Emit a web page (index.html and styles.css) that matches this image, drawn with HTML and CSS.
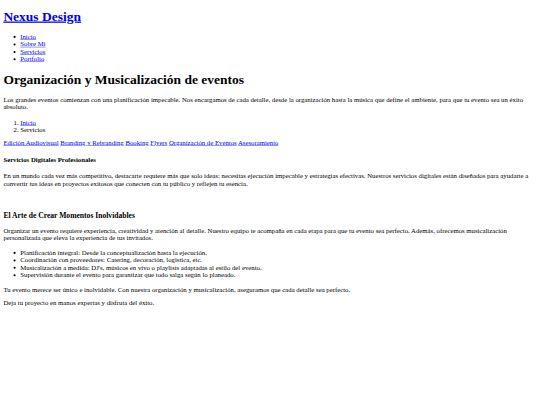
FILE: index.html
```html
<!DOCTYPE html>
<html lang="es">
<head>
<meta charset="utf-8">
<title>Nexus Design</title>
<link rel="stylesheet" href="styles.css">
</head>
<body>
<div class="page">
<header class="site-header">
  <h1 class="logo"><a href="#">Nexus Design</a></h1>
  <nav>
    <ul class="menu">
      <li><a href="#">Inicio</a></li>
      <li><a href="#">Sobre Mi</a></li>
      <li><a href="#">Servicios</a></li>
      <li><a href="#">Portfolio</a></li>
    </ul>
  </nav>
</header>
<main>
  <section class="hero">
    <h1 class="title">Organización y Musicalización de eventos</h1>
    <p>Los grandes eventos comienzan con una planificación impecable. Nos encargamos de cada detalle, desde la organización hasta la música que define el ambiente, para que tu evento sea un éxito absoluto.</p>
    <ol class="crumbs">
      <li><a href="#">Inicio</a></li>
      <li>Servicios</li>
    </ol>
    <div class="tabs">
      <a href="#">Edición Audiovisual</a>
      <a href="#">Branding y Rebranding</a>
      <a href="#">Booking</a>
      <a href="#">Flyers</a>
      <a href="#">Organización de Eventos</a>
      <a href="#">Asesoramiento</a>
    </div>
    <h4 class="sub">Servicios Digitales Profesionales</h4>
    <p>En un mundo cada vez más competitivo, destacarte requiere más que solo ideas: necesitas ejecución impecable y estrategias efectivas. Nuestros servicios digitales están diseñados para ayudarte a convertir tus ideas en proyectos exitosos que conecten con tu público y reflejen tu esencia.</p>
  </section>
  <section class="detail">
    <h3 class="section-title">El Arte de Crear Momentos Inolvidables</h3>
    <p>Organizar un evento requiere experiencia, creatividad y atención al detalle. Nuestro equipo te acompaña en cada etapa para que tu evento sea perfecto. Además, ofrecemos musicalización personalizada que eleva la experiencia de tus invitados.</p>
    <ul class="features">
      <li>Planificación integral: Desde la conceptualización hasta la ejecución.</li>
      <li>Coordinación con proveedores: Catering, decoración, logística, etc.</li>
      <li>Musicalización a medida: DJ's, músicos en vivo o playlists adaptadas al estilo del evento.</li>
      <li>Supervisión durante el evento para garantizar que todo salga según lo planeado.</li>
    </ul>
    <p>Tu evento merece ser único e inolvidable. Con nuestra organización y musicalización, aseguramos que cada detalle sea perfecto.</p>
    <p>Deja tu proyecto en manos expertas y disfruta del éxito.</p>
  </section>
</main>
</div>
</body>
</html>
```

FILE: styles.css
```css
html, body {
  margin: 0;
  padding: 0;
  overflow: hidden;
  background: #fff;
}
.page {
  display: flow-root;
  width: 1264px;
  padding: 0 8px;
  transform: scale(0.421875);
  transform-origin: 0 0;
  font-family: "Liberation Serif", "Times New Roman", serif;
  font-size: 16px;
  line-height: 1.107;
  color: #000;
}
a {
  color: #0000ee;
}
h1 {
  font-size: 2em;
  margin: 0.67em 0;
}
h3 {
  font-size: 18px;
  margin: 18px 0;
}
h4 {
  font-size: 1em;
  margin: 1.33em 0;
}
p {
  margin: 1em 0;
}
ul, ol {
  margin: 1em 0;
  padding-left: 40px;
}
.crumbs {
  margin: 19px 0 13px;
}
.detail {
  padding-top: 23px;
}
```
